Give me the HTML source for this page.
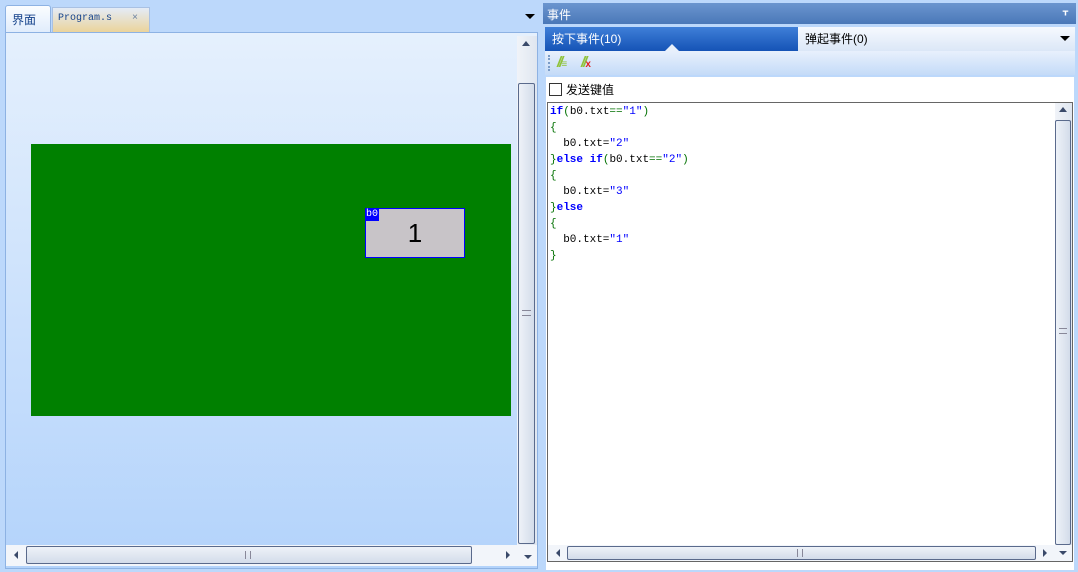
<!DOCTYPE html>
<html><head><meta charset="utf-8"><style>
*{margin:0;padding:0;box-sizing:border-box}
body{width:1078px;height:570px;background:#bcd8fb;position:relative;overflow:hidden;font-family:"Liberation Sans","Noto Sans CJK SC",sans-serif;font-size:12px}
.a{position:absolute}
.vs{background:linear-gradient(to right,#f0f3f8,#dfe6f0);}
.thumbv{border:1px solid #5a6a8c;border-radius:2px;background:linear-gradient(to right,#eef2f8,#d3dcea)}
.thumbh{border:1px solid #5a6a8c;border-radius:2px;background:linear-gradient(#eef2f8,#d3dcea)}
.code{font-family:"Liberation Mono","Noto Sans CJK SC",monospace;font-size:11px;line-height:16px;color:#000}
.g{color:#007000}.b{color:#0000ff}.k{color:#0000ff;font-weight:bold}
</style></head><body>
<div class="a" style="left:0;top:0;width:540px;height:570px;background:#bcd8fb"></div>
<div class="a" style="left:5px;top:5px;width:46px;height:28px;background:linear-gradient(#fbfdff,#e0ecfc);border:1px solid #8db2e3;border-bottom:none;border-radius:3px 3px 0 0;font-size:12px;color:#15428b;padding:5px 0 0 6px">界面</div>
<div class="a" style="left:52px;top:7px;width:98px;height:25px;background:linear-gradient(#e4ecf7,#ebd49b);border:1px solid #a9c1e3;border-bottom:none;font-family:'Liberation Mono',monospace;font-size:10px;color:#15428b;padding:5px 0 0 5px">Program.s<span style="color:#6a80a0;margin-left:20px">×</span></div>
<div class="a" style="left:525px;top:14px;width:0;height:0;border-left:5px solid transparent;border-right:5px solid transparent;border-top:5px solid #000"></div>
<div class="a" style="left:5px;top:32px;width:533px;height:537px;border:1px solid #8db2e3;background:linear-gradient(#e5f0fd,#b3d3fb)"></div>
<div class="a" style="left:31px;top:144px;width:480px;height:272px;background:#008000"></div>
<div class="a" style="left:365px;top:208px;width:100px;height:50px;background:#c8c4c8;border:1px solid #0000ff;font-size:26px;text-align:center;line-height:48px;color:#000">1</div>
<div class="a" style="left:366px;top:209px;width:13px;height:12px;background:#0000ff;color:#fff;font-size:10px;line-height:12px;font-family:'Liberation Mono',monospace">b0</div>
<div class="a vs" style="left:517px;top:36px;width:20px;height:509px"></div>
<div class="a" style="left:522px;top:41px;width:0;height:0;border-left:4px solid transparent;border-right:4px solid transparent;border-bottom:5px solid #3a4a6a"></div>
<div class="a thumbv" style="left:518px;top:83px;width:17px;height:461px"></div>
<div class="a" style="left:522px;top:310px;width:9px;height:6px;border-top:1px solid #889;border-bottom:1px solid #889"></div>
<div class="a" style="left:6px;top:545px;width:531px;height:21px;background:#f2f5fa"></div>
<div class="a" style="left:14px;top:551px;border-top:4px solid transparent;border-bottom:4px solid transparent;border-right:4px solid #3a4a6a"></div>
<div class="a thumbh" style="left:26px;top:546px;width:446px;height:18px"></div>
<div class="a" style="left:245px;top:551px;width:6px;height:8px;border-left:1px solid #889;border-right:1px solid #889"></div>
<div class="a" style="left:506px;top:551px;border-top:4px solid transparent;border-bottom:4px solid transparent;border-left:4px solid #3a4a6a"></div>
<div class="a" style="left:524px;top:555px;width:0;border-left:4px solid transparent;border-right:4px solid transparent;border-top:4px solid #3a4a6a"></div>
<div class="a" style="left:543px;top:3px;width:533px;height:21px;background:linear-gradient(#6b95cf,#4a78b8);color:#fff;font-size:12px;padding:3px 0 0 4px">事件</div>
<div class="a" style="left:1063px;top:6px;color:#fff;font-size:10px;font-weight:bold">ᚁ</div>
<div class="a" style="left:545px;top:27px;width:530px;height:545px;background:#bcd8fb"></div>
<div class="a" style="left:545px;top:27px;width:253px;height:24px;background:linear-gradient(#3f7fd8,#1553b6);color:#fff;font-size:12px;padding:3px 0 0 7px">按下事件(10)</div>
<div class="a" style="left:665px;top:44px;border-left:7px solid transparent;border-right:7px solid transparent;border-bottom:7px solid #e8f0fb"></div>
<div class="a" style="left:798px;top:27px;width:277px;height:24px;background:linear-gradient(#f6f9fe,#dbe7f7);color:#000;font-size:12px;padding:3px 0 0 7px">弹起事件(0)</div>
<div class="a" style="left:1060px;top:36px;border-left:5px solid transparent;border-right:5px solid transparent;border-top:5px solid #000"></div>
<div class="a" style="left:545px;top:51px;width:530px;height:24px;background:linear-gradient(#e8f0fc,#c4dbf8)"></div>
<div class="a" style="left:548px;top:55px;width:2px;height:16px;border-left:2px dotted #7a9cc8"></div>
<div class="a" style="left:557px;top:54px;color:#8fc23a;font-weight:bold;font-style:italic;font-size:15px;letter-spacing:-2px">//<span style="font-size:10px;font-style:normal">≡</span></div>
<div class="a" style="left:581px;top:54px;color:#8fc23a;font-weight:bold;font-style:italic;font-size:15px;letter-spacing:-2px">//<span style="color:#e02020;font-size:10px;font-style:normal">x</span></div>
<div class="a" style="left:546px;top:77px;width:528px;height:493px;background:#fff"></div>
<div class="a" style="left:549px;top:83px;width:13px;height:13px;border:1px solid #333;background:#fff"></div>
<div class="a" style="left:566px;top:81px;font-size:12px">发送键值</div>
<div class="a" style="left:547px;top:102px;width:526px;height:460px;border:1px solid #666;background:#fff"></div>
<div class="a code" style="left:550px;top:104px">
<div><span class="k">if</span><span class="g">(</span>b0.txt<span class="g">==</span><span class="b">"1"</span><span class="g">)</span></div>
<div class="g">{</div>
<div>&nbsp;&nbsp;b0.txt=<span class="b">"2"</span></div>
<div><span class="g">}</span><span class="k">else if</span><span class="g">(</span>b0.txt<span class="g">==</span><span class="b">"2"</span><span class="g">)</span></div>
<div class="g">{</div>
<div>&nbsp;&nbsp;b0.txt=<span class="b">"3"</span></div>
<div><span class="g">}</span><span class="k">else</span></div>
<div class="g">{</div>
<div>&nbsp;&nbsp;b0.txt=<span class="b">"1"</span></div>
<div class="g">}</div>
</div>
<div class="a vs" style="left:1055px;top:103px;width:17px;height:442px"></div>
<div class="a" style="left:1059px;top:107px;border-left:4px solid transparent;border-right:4px solid transparent;border-bottom:5px solid #3a4a6a"></div>
<div class="a thumbv" style="left:1055px;top:120px;width:16px;height:425px"></div>
<div class="a" style="left:1059px;top:328px;width:8px;height:6px;border-top:1px solid #889;border-bottom:1px solid #889"></div>
<div class="a" style="left:548px;top:545px;width:524px;height:16px;background:#f2f5fa"></div>
<div class="a" style="left:556px;top:549px;border-top:4px solid transparent;border-bottom:4px solid transparent;border-right:4px solid #3a4a6a"></div>
<div class="a thumbh" style="left:567px;top:546px;width:469px;height:14px"></div>
<div class="a" style="left:797px;top:549px;width:6px;height:8px;border-left:1px solid #889;border-right:1px solid #889"></div>
<div class="a" style="left:1043px;top:549px;border-top:4px solid transparent;border-bottom:4px solid transparent;border-left:4px solid #3a4a6a"></div>
<div class="a" style="left:1059px;top:551px;border-left:4px solid transparent;border-right:4px solid transparent;border-top:4px solid #3a4a6a"></div>
</body></html>
